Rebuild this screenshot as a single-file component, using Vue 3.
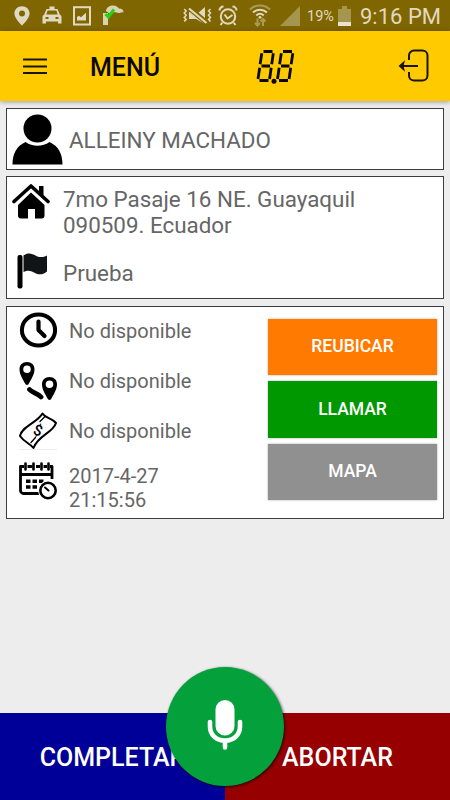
<template>
  <div class="screen">
    <div class="status-bar">
      <svg class="st-pin" width="16" height="20" viewBox="0 0 16 20">
        <path fill="#e0d9bf" fill-rule="evenodd" d="M8 0.2C3.6 0.2 0.4 3.4 0.4 7.6 0.4 12.6 8 19.6 8 19.6s7.600-7 7.600-12C15.600 3.400 12.400 0.200 8 0.200zM8 4.500a3 3 0 1 1 0 6 3 3 0 0 1 0-6z" />
      </svg>
      <svg class="st-taxi" width="20" height="19" viewBox="0 0 20 19">
        <path fill="#e0d9bf" fill-rule="evenodd" d="M7.500 0.500h5v2.500h3l2.300 5.500 1.700 1.500v7.500h-3.500V15.500H4v2H0.500V10l1.700-1.500L4.500 3h3zM5.600 4.600L4.300 8.600h11.400l-1.300-4zM3.500 11v2h3v-2zM13.500 11v2h3v-2z" />
      </svg>
      <svg class="st-image" width="18" height="20" viewBox="0 0 18 20">
        <rect x="1" y="1.200" width="16" height="17.300" fill="none" stroke="#e0d9bf" stroke-width="2" />
        <path fill="#e0d9bf" d="M4 14.500V11l2-1.200 2 1.500 5-4.500v7.700z" />
      </svg>
      <svg class="st-palm" width="22" height="21" viewBox="0 0 22 21">
        <path fill="#d9d2b3" d="M4 6C4 3 7 0.500 11 0.500c3 0 5 1.500 6 3 3 0 4.500 1.500 4.500 4-2-1-3 .5-5 .5-1.500 0-2.500-1-5-.5-2 .5-4 1-5.500 0z" />
        <rect x="1" y="8" width="5" height="12" fill="#d9d2b3" />
        <path fill="none" stroke="#1fd615" stroke-width="3" d="M3.500 9l2.800 3L12 4.500" />
      </svg>

      <div class="status-right">
        <svg class="st-mute" width="29" height="20" viewBox="0 0 29 20">
          <path fill="none" stroke="#e0d9bf" stroke-width="1.500" d="M1.200 3l2 2-2 2 2 2.200-2 2.200 2 2-2 2M27.500 3l-2 2 2 2-2 2.200 2 2.200-2 2 2 2" />
          <path fill="#e0d9bf" d="M6 6h5l3 2 8-7v17l-9-5H6z" />
          <path stroke="#806600" stroke-width="5" d="M6 2l18 15" />
          <path stroke="#e0d9bf" stroke-width="2.200" d="M6 2.500l17.500 14.500" />
        </svg>
        <svg class="st-alarm" width="20" height="21" viewBox="0 0 20 21">
          <circle cx="10" cy="11.500" r="7.200" fill="none" stroke="#e0d9bf" stroke-width="2" />
          <path fill="none" stroke="#e0d9bf" stroke-width="2" d="M6.500 9.500l3 4 5-3.500M1.500 5.500a4 4 0 0 1 4-4M18.500 5.500a4 4 0 0 0-4-4M4.500 17.500L2.500 20M15.500 17.500l2 2.500" />
        </svg>
        <svg class="st-wifi" width="22" height="23" viewBox="0 0 22 23">
          <path fill="none" stroke="#aa9a57" stroke-width="2" d="M1 5.500c5.500-5.500 14.500-5.500 20 0" />
          <path fill="none" stroke="#e0d9bf" stroke-width="2" d="M4 8.500c4-3.800 10-3.800 14 0M7.300 11.500c2.200-2 5.200-2 7.400 0" />
          <circle cx="11" cy="13.300" r="1.400" fill="#e0d9bf" />
          <path fill="none" stroke="#aa9a57" stroke-width="2" d="M8.500 14.500v7M6 19l2.500 2.500L11 19M14 22v-6.500M11.500 17.500L14 15l2.500 2.500" />
        </svg>
        <svg class="st-signal" width="20" height="20" viewBox="0 0 20 20">
          <path fill="#a6954f" d="M0 20L20 0v20z" />
        </svg>
        <span class="battery-text">19%</span>
        <svg class="st-battery" width="13" height="20" viewBox="0 0 13 20">
          <path fill="#a6954f" d="M4 0h5v3h4v13H0V3h4z" />
          <rect x="0" y="16" width="13" height="4" fill="#e8e3cf" />
        </svg>
        <span class="clock">9:16 PM</span>
      </div>
    </div>

    <header class="app-bar">
      <svg class="menu-icon" width="24" height="17" viewBox="0 0 24 17">
        <path stroke="#1a1500" stroke-width="2.200" d="M0 1.500h24M0 8.500h24M0 15h24" />
      </svg>
      <h1 class="title">MENÚ</h1>
      <svg class="meter-icon" width="40" height="35" viewBox="0 0 40 35">
        <g v-for="x in [0, 19.500]" :key="x" :transform="`translate(${x} 0)`" stroke="#0a0800" stroke-width="2.800">
          <path d="M7.500 2.500h9M5.500 17h8.500M3.500 31.500h9" />
          <path d="M5.800 4.200l-1.700 11M17.300 4.200l-1.600 11M3.700 18.800L2 30M15.200 18.800L13.600 30" />
        </g>
        <circle cx="18" cy="32.200" r="2.500" fill="#0a0800" />
      </svg>
      <svg class="exit-icon" width="32" height="34" viewBox="0 0 32 34">
        <path fill="none" stroke="#1a1500" stroke-width="2" d="M11 11V6.500a5 5 0 0 1 5-5h8.500a5 5 0 0 1 5 5v20a5 5 0 0 1-5 5H16a5 5 0 0 1-5-5V23M4 17h16" />
        <path fill="#1a1500" d="M0.500 17L7 11.300 5.500 17 7 22.700z" />
      </svg>
    </header>

    <main class="content">
      <section class="card client">
        <svg width="51" height="51" viewBox="0 0 51 51">
          <circle cx="25.500" cy="14.500" r="14" />
          <path d="M0.500 50.500C0.500 39 5 32 13.500 28c7 5 17 5 24 0C46 32 50.500 39 50.500 50.500z" />
        </svg>
        <span class="client-name">ALLEINY MACHADO</span>
      </section>

      <section class="card address">
        <div class="address-row">
          <svg width="38" height="37" viewBox="0 0 38 37">
            <path fill="none" stroke="#000" stroke-width="3.600" stroke-linecap="round" stroke-linejoin="round" d="M2 18.500L19 3l17 15.500" />
            <path d="M27 3h4.500v11L27 10zM19 9.500L32.500 22v10.500a3 3 0 0 1-3 3H23V26h-7v9.500H9a3 3 0 0 1-3-3V22z" />
          </svg>
          <p>7mo Pasaje 16 NE. Guayaquil<br />090509. Ecuador</p>
        </div>
        <div class="address-row reference">
          <svg width="38" height="37" viewBox="0 0 38 37">
            <rect x="5.500" y="3" width="5" height="33.500" rx="2" />
            <path fill="#111416" d="M11.500 3.500c4-3.500 9-2 12 0 3 1.800 7 2.500 11.500 0v16c-4 3.500-9 3.500-12 1.500-3-1.800-6.500-3.500-11.500-1z" />
          </svg>
          <p>Prueba</p>
        </div>
      </section>

      <section class="card trip">
        <ul class="details">
          <li>
            <svg width="38" height="38" viewBox="0 0 38 38">
              <ellipse cx="19.500" cy="18" rx="16.600" ry="15.600" fill="none" stroke="#000" stroke-width="4" />
              <path fill="none" stroke="#000" stroke-width="4.200" stroke-linecap="round" stroke-linejoin="round" d="M19.500 9.500V18l6 6" />
            </svg>
            <span>{{ unavailable }}</span>
          </li>
          <li>
            <svg width="38" height="38" viewBox="0 0 38 38">
              <path fill-rule="evenodd" d="M8 0C3.500 0 0.500 3 0.500 7.200c0 5 3 9.500 6 15q1.500 1.500 3 0c3-5.500 6-10 6-15C15.500 3 12.500 0 8 0zm0 3.500a3.800 3.800 0 1 1 0 7.600 3.800 3.800 0 0 1 0-7.600z" />
              <path fill-rule="evenodd" d="M30.500 15c-4.500 0-7.500 3-7.500 7.200 0 5 3 9.500 6 15q1.500 1.500 3 0c3-5.500 6-10 6-15 0-4.200-3-7.200-7.500-7.200zm0 3.500a3.800 3.800 0 1 1 0 7.600 3.800 3.800 0 0 1 0-7.600z" />
              <path fill="none" stroke="#000" stroke-width="4.800" stroke-linecap="round" d="M10.500 27.500c3 3.500 8 3.500 11.500 7.500" />
            </svg>
            <span>{{ unavailable }}</span>
          </li>
          <li>
            <svg width="38" height="38" viewBox="0 0 38 38">
              <g fill="none" stroke="#000" stroke-width="2" stroke-linejoin="round" stroke-linecap="round">
                <path d="M23.500 1.500c3 5 9 4 13.500 9.500-3 10-18 12-22.500 25-4-5-9-5.500-13.500-12 2-10 17-13 22.500-22.500z" />
                <path stroke-width="1.300" d="M21 9.500l5-5M12 30.500l4.500-5" />
              </g>
              <text class="bill-sign" x="19" y="23.500" text-anchor="middle" transform="rotate(20 19 18.500)">$</text>
              <path stroke="#eee" stroke-width="1" d="M0 37.500h38" />
            </svg>
            <span>{{ unavailable }}</span>
          </li>
          <li>
            <svg width="38" height="38" viewBox="0 0 38 38">
              <g fill="none" stroke="#000" stroke-width="2.800" stroke-linejoin="round">
                <path d="M5 4.500H1.500v24a3 3 0 0 0 3 3H20M31 4.500h2V17M1.500 12.500H33M8.500 4.500h5M17 4.500h4M24.500 4.500H28" />
                <path stroke-width="2.600" stroke-linecap="round" d="M6.500 1.500v6M14.500 1.500v6M22.500 1.500v6M29.500 1.500v6" />
              </g>
              <path stroke="#000" stroke-width="3.400" stroke-dasharray="4.500 2" d="M7 19.300h18M7 25h13" />
              <circle cx="29" cy="28.500" r="10" fill="#fff" />
              <circle cx="29" cy="28.500" r="7.700" fill="none" stroke="#000" stroke-width="2.600" />
              <path stroke="#000" stroke-width="2" stroke-linecap="round" d="M26 25.500l3.500 3" />
            </svg>
            <span class="date">2017-4-27<br />21:15:56</span>
          </li>
        </ul>
        <div class="actions">
          <button v-for="a in actions" :key="a.label" :class="a.kind">{{ a.label }}</button>
        </div>
      </section>
    </main>

    <footer class="bottom-bar">
      <button class="complete">COMPLETAR</button>
      <button class="abort">ABORTAR</button>
      <div class="mic">
        <svg width="36" height="50" viewBox="0 0 36 50">
          <rect x="8.500" y="0" width="19" height="35.500" rx="9.500" fill="#fff" />
          <path fill="none" stroke="#fff" stroke-width="4.600" stroke-linecap="round" d="M3 22v4.500c0 8.500 6.500 14 15 14s15-5.500 15-14V22M18 41v6.500" />
        </svg>
      </div>
    </footer>
  </div>
</template>

<script setup>
const unavailable = 'No disponible'

const actions = [
  { label: 'REUBICAR', kind: 'relocate' },
  { label: 'LLAMAR', kind: 'call' },
  { label: 'MAPA', kind: 'map' }
]
</script>

<style>
body {
  margin: 0;
}
</style>

<style scoped>
.screen {
  width: 450px;
  height: 800px;
  display: flex;
  flex-direction: column;
  overflow: hidden;
  background: #ededed;
  font-family: Roboto, "Liberation Sans", sans-serif;
  color: #666;
}

svg {
  display: block;
  flex: none;
}

button {
  border: 0;
  padding: 0;
  font-family: inherit;
  font-weight: 500;
  color: #fff;
}

.status-bar {
  height: 31px;
  flex: none;
  display: flex;
  align-items: center;
  padding: 0 10px 0 14px;
  background: #806600;
  color: #e0d9bf;
}

.st-taxi {
  margin-left: 12px;
}

.st-image {
  margin-left: 11px;
}

.st-palm {
  margin-left: 11px;
}

.status-right {
  margin-left: auto;
  display: flex;
  align-items: center;
}

.st-alarm {
  margin-left: 6px;
}

.st-wifi {
  margin-left: 11px;
}

.st-signal {
  margin-left: 9px;
}

.battery-text {
  width: 27px;
  margin-left: 7px;
  font-size: 14.5px;
  line-height: 30px;
  padding-top: 2px;
  white-space: nowrap;
}

.st-battery {
  margin-left: 4px;
}

.clock {
  width: 80px;
  margin-left: 9px;
  padding-top: 2px;
  font-size: 22px;
  line-height: 30px;
  white-space: nowrap;
}

.app-bar {
  position: relative;
  height: 70px;
  flex: none;
  display: flex;
  align-items: center;
  padding: 0 20px 0 23px;
  background: #ffcb00;
  box-shadow: 0 1px 5px rgba(0, 0, 0, 0.35);
}

.title {
  width: 77px;
  margin: 2px 0 0 43px;
  font-size: 25px;
  font-weight: 500;
  color: #0a0800;
}

.meter-icon {
  margin-left: 89px;
}

.exit-icon {
  margin-left: auto;
}

.content {
  flex: 1;
  display: flex;
  flex-direction: column;
  gap: 6px;
  padding: 7px 6px;
}

.card {
  box-sizing: border-box;
  border: 1px solid #3c3c3c;
  background: #fff;
}

.client {
  height: 62px;
  display: flex;
  align-items: center;
  gap: 6px;
  padding-left: 5px;
}

.client-name {
  padding-top: 1px;
  font-size: 22.4px;
}

.address {
  height: 123px;
  padding: 8px 5px 0;
}

.address-row {
  display: flex;
  align-items: flex-start;
  gap: 13px;
  height: 69px;
}

.address-row svg {
  margin-top: -2px;
}

.address-row p {
  margin: 1px 0 0;
  font-size: 22.4px;
  line-height: 26px;
  white-space: nowrap;
}

.reference p {
  margin-top: 6px;
}

.trip {
  height: 213px;
  display: flex;
  justify-content: space-between;
  margin-top: 1px;
  padding: 6px 6px 0 12px;
}

.details {
  list-style: none;
  margin: 0;
  padding: 0;
}

.details li {
  height: 50px;
  display: flex;
  align-items: flex-start;
  gap: 12px;
  font-size: 20px;
  line-height: 24px;
}

.details li svg {
  margin-top: -1px;
}

.details span {
  padding-top: 6px;
  white-space: nowrap;
}

.details .date {
  padding-top: 1px;
}

.bill-sign {
  font-size: 15px;
  font-weight: 500;
}

.actions {
  width: 169px;
  display: flex;
  flex-direction: column;
  gap: 6px;
  padding-top: 5.5px;
}

.actions button {
  height: 56.5px;
  padding-bottom: 1px;
  font-size: 17.5px;
  box-shadow: 0 0 2px rgba(0, 0, 0, 0.35);
}

.relocate {
  background: #ff7a00;
}

.call {
  background: #009800;
}

.map {
  background: #909090;
}

.bottom-bar {
  position: relative;
  height: 87px;
  flex: none;
  display: flex;
}

.bottom-bar button {
  flex: 1;
  padding-top: 2px;
  font-size: 25px;
}

.complete {
  background: #000098;
}

.abort {
  background: #960000;
}

.mic {
  position: absolute;
  left: 166px;
  top: -46px;
  width: 118px;
  height: 119px;
  display: flex;
  align-items: center;
  justify-content: center;
  border-radius: 50%;
  background: #04a03c;
  box-shadow: 1px 1px 3px rgba(0, 0, 0, 0.7);
}

.mic svg {
  margin-bottom: 4px;
}
</style>
